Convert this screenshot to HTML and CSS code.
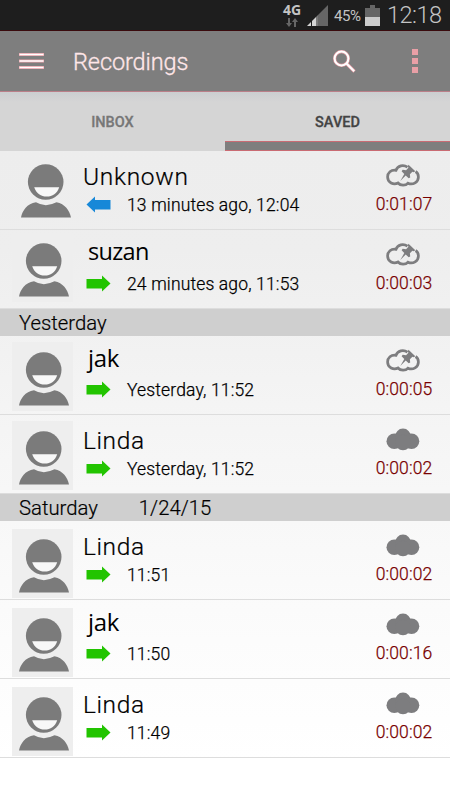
FILE: index.html
```html
<!DOCTYPE html>
<html lang="en">
<head>
  <meta charset="UTF-8">
  <title>Recordings</title>
  <link rel="stylesheet" href="styles.css">
</head>
<body>

  <!-- shared icons -->
  <svg class="defs" width="0" height="0">
    <symbol id="avatar" viewBox="0 0 61 69">
      <circle cx="31.7" cy="28" r="17.8" fill="#7b7b7b"/>
      <path d="M20.2 33.2H45.2C43 39.5 38.500 42.600 32.700 42.600S22.500 39.500 20.200 33.200Z" fill="#f8f8f8"/>
      <path d="M7 63.500C8.500 56.500 13 49.500 22 48.300Q31.500 54 42.500 48.300C51 50 55.500 56.500 57 63.500Z" fill="#7b7b7b"/>
    </symbol>
    <symbol id="arrow" viewBox="0 0 25 18">
      <path d="M.500 4H16V.500L24.500 8.500L16 16.500V13.500H.500Z"/>
    </symbol>
    <symbol id="cloud" viewBox="0 0 34 23">
      <g fill="#7d7d7f">
        <circle cx="8.300" cy="13.200" r="7.800"/>
        <circle cx="17" cy="8.500" r="7.900"/>
        <circle cx="25.500" cy="13.200" r="7.800"/>
        <circle cx="17" cy="14.500" r="7.800"/>
      </g>
    </symbol>
    <symbol id="cloud-pin" viewBox="0 0 34 23">
      <path d="M21.500 3.200C17.500.200 11.500 1.500 10 6.300C5 5.500 1.600 9 1.600 13C1.600 18.500 7.500 21.500 12 19C14.500 21.800 19.500 21.800 22 19.200C27 21.500 32.400 18 32.400 13C32.400 10.600 31.400 8.600 29.600 7.500" fill="none" stroke="#7d7d7f" stroke-width="2.700"/>
      <path d="M22.500.800L29.300 7.200L27.700 8.200L26.400 7.700L23.900 10.300L24.200 13.400L22.700 14.300L19.700 11.500L14.300 16.900L18.300 10.100L15.600 7.300L16.700 5.800L20.100 6.200L22.400 3.700L21.800 2.200Z" fill="#7d7d7f"/>
    </symbol>
  </svg>

  <div class="status">
    <div class="network">
      <span>4G</span>
      <svg width="12" height="9" viewBox="0 0 12 9"><path d="M2 0H4V5H6L3 9L0 5H2ZM8 9H10V4H12L9 0L6 4H8Z" fill="#666"/></svg>
    </div>
    <svg class="signal" width="21" height="21" viewBox="0 0 21 21">
      <path d="M0 21L11 10V21Z" fill="#d5d5d5"/>
      <path d="M11 10L21 0V21H11Z" fill="#666"/>
      <path d="M4.500 14V21M10 9V21" stroke="#1e1e1e"/>
    </svg>
    <span class="percent">45%</span>
    <svg class="battery" width="15" height="21" viewBox="0 0 15 21">
      <path d="M5 0H10V3H15V12H0V3H5Z" fill="#666"/>
      <path d="M0 12H15V21H0Z" fill="#ccc"/>
    </svg>
    <span class="clock">12:18</span>
  </div>

  <header class="appbar">
    <svg class="menu" width="25" height="16" viewBox="0 0 25 16"><path d="M0 1.500H25M0 8H25M0 14.500H25" stroke="#eaa0a8" stroke-width="2.800"/><path d="M.5 1.500H24.500M.5 8H24.500M.5 14.500H24.500" stroke="#fff" stroke-width="1.700"/></svg>
    <h1>Recordings</h1>
    <svg class="search" width="23" height="23" viewBox="0 0 23 23" fill="none">
      <g stroke="#eaa0a8" stroke-width="3.200"><circle cx="8.500" cy="8.500" r="6.900"/><path d="M13.500 13.500L21.500 21.500"/></g>
      <g stroke="#fff" stroke-width="2"><circle cx="8.500" cy="8.500" r="6.900"/><path d="M13.500 13.500L21.200 21.200"/></g>
    </svg>
    <div class="more"><i></i><i></i><i></i></div>
  </header>

  <nav class="tabs">
    <div class="tab">INBOX</div>
    <div class="tab active">SAVED</div>
  </nav>

  <main>
    <div class="row first">
      <svg class="avatar"><use href="#avatar"/></svg>
      <div class="info">
        <div class="name wide">Unknown</div>
        <div class="detail"><svg class="arrow in"><use href="#arrow"/></svg>13 minutes ago, 12:04</div>
      </div>
      <div class="side"><svg class="cloud"><use href="#cloud-pin"/></svg><span>0:01:07</span></div>
    </div>
    <div class="row second">
      <svg class="avatar"><use href="#avatar"/></svg>
      <div class="info">
        <div class="name alt">suzan</div>
        <div class="detail"><svg class="arrow"><use href="#arrow"/></svg>24 minutes ago, 11:53</div>
      </div>
      <div class="side"><svg class="cloud"><use href="#cloud-pin"/></svg><span>0:00:03</span></div>
    </div>

    <div class="day">Yesterday</div>

    <div class="row third">
      <svg class="avatar"><use href="#avatar"/></svg>
      <div class="info">
        <div class="name alt jak">jak</div>
        <div class="detail"><svg class="arrow"><use href="#arrow"/></svg>Yesterday, 11:52</div>
      </div>
      <div class="side"><svg class="cloud"><use href="#cloud-pin"/></svg><span>0:00:05</span></div>
    </div>
    <div class="row third">
      <svg class="avatar"><use href="#avatar"/></svg>
      <div class="info">
        <div class="name">Linda</div>
        <div class="detail"><svg class="arrow"><use href="#arrow"/></svg>Yesterday, 11:52</div>
      </div>
      <div class="side"><svg class="cloud"><use href="#cloud"/></svg><span>0:00:02</span></div>
    </div>

    <div class="day"><span>Saturday</span><span>1/24/15</span></div>

    <div class="row">
      <svg class="avatar"><use href="#avatar"/></svg>
      <div class="info">
        <div class="name">Linda</div>
        <div class="detail"><svg class="arrow"><use href="#arrow"/></svg>11:51</div>
      </div>
      <div class="side"><svg class="cloud"><use href="#cloud"/></svg><span>0:00:02</span></div>
    </div>
    <div class="row">
      <svg class="avatar"><use href="#avatar"/></svg>
      <div class="info">
        <div class="name alt jak">jak</div>
        <div class="detail"><svg class="arrow"><use href="#arrow"/></svg>11:50</div>
      </div>
      <div class="side"><svg class="cloud"><use href="#cloud"/></svg><span>0:00:16</span></div>
    </div>
    <div class="row">
      <svg class="avatar"><use href="#avatar"/></svg>
      <div class="info">
        <div class="name">Linda</div>
        <div class="detail"><svg class="arrow"><use href="#arrow"/></svg>11:49</div>
      </div>
      <div class="side"><svg class="cloud"><use href="#cloud"/></svg><span>0:00:02</span></div>
    </div>
  </main>

</body>
</html>
```
FILE: styles.css
```css
* { box-sizing: border-box; }
body {
  margin: 0;
  width: 450px;
  height: 800px;
  overflow: hidden;
  font-family: Roboto, "Liberation Sans", sans-serif;
  color: #000;
  background: linear-gradient(#ededed 150px, #eeeeee 250px, #f5f5f5 430px, #fcfcfc 640px, #fff 760px);
}
svg { display: block; flex: none; }
.defs { position: absolute; }

/* status bar */
.status {
  display: flex;
  height: 31px;
  padding-right: 8px;
  justify-content: flex-end;
  background: #1e1e1e;
  border-bottom: 1px solid #3a0a0d;
  color: #c4c4c4;
}
.network {
  display: flex;
  flex-direction: column;
  align-items: center;
  width: 18px;
  margin-right: 6px;
  padding-top: 3px;
  font: bold 14px/14px "Open Sans", sans-serif;
}
.network svg { margin-top: 1px; }
.signal { margin-top: 5px; }
.percent {
  width: 29px;
  margin-left: 6px;
  font-size: 15px;
  line-height: 32px;
  letter-spacing: -0.4px;
}
.battery { margin: 5px 0 0 2px; }
.clock {
  width: 55px;
  margin-left: 7px;
  font-size: 23.5px;
  font-weight: 300;
  line-height: 31px;
  letter-spacing: -0.5px;
  white-space: nowrap;
}

/* app bar */
.appbar {
  display: flex;
  align-items: center;
  height: 61px;
  padding: 0 32px 0 19px;
  background: #7e7e7e;
  border-bottom: 1px solid #ba7f89;
}
h1 {
  flex: 1;
  margin: 2px 0 0 29px;
  font-size: 23.5px;
  font-weight: 300;
  letter-spacing: -0.1px;
  color: #ffe6e8;
  -webkit-text-stroke: 0.3px #ffe6e8;
}
.search { margin-right: 56px; }
.more {
  display: grid;
  gap: 3px;
}
.more i {
  width: 6px;
  height: 6px;
  background: #e89fa6;
}

/* tabs */
.tabs {
  display: flex;
  height: 59px;
  background: linear-gradient(#cbced0, #d5d5d5 10px);
}
.tab {
  flex: 0 0 225px;
  font-size: 14.5px;
  font-weight: 500;
  line-height: 61px;
  text-align: center;
  color: #777;
  -webkit-text-stroke: 0.3px;
}
.tab.active {
  color: #444;
  background: linear-gradient(#c96b73 1px, #7e7e7e 1px, #7e7e7e 9px, #c96b73 9px) 0 100% / 100% 10px no-repeat;
}

/* list */
.row {
  display: flex;
  height: 79px;
  padding-left: 12px;
  border-bottom: 1px solid #ddd;
}
.avatar {
  width: 61px;
  height: 69px;
  margin-top: 8px;
  background: #eee;
}
.first .avatar {
  margin: 3px -2px 0 2px;
  background: none;
}
.second .avatar { margin-top: 3px; }
.third .avatar { margin-top: 6px; }
.info {
  flex: 1;
  padding: 10px 0 0 10px;
}
.name {
  height: 32px;
  font-size: 24.5px;
  font-weight: 300;
  line-height: 32px;
  letter-spacing: 0.6px;
  -webkit-text-stroke: 0.2px;
}
.name.wide { letter-spacing: 0.7px; }
.name.alt {
  padding-left: 5px;
  font-family: "Open Sans", sans-serif;
  font-size: 23.5px;
  font-weight: 400;
  line-height: 23px;
  letter-spacing: -0.7px;
  -webkit-text-stroke: 0;
}
.name.jak {
  font-size: 24px;
  line-height: 24px;
  letter-spacing: -0.3px;
}
.detail {
  display: flex;
  align-items: center;
  height: 23px;
  padding-left: 3px;
  font-size: 17.5px;
  font-weight: 300;
  letter-spacing: 0.15px;
  -webkit-text-stroke: 0.25px;
}
.arrow {
  width: 25px;
  height: 18px;
  margin: 1px 16px 0 0;
  fill: #22c400;
  stroke: none;
}
.arrow.in {
  fill: #1788d8;
  transform: scaleX(-1);
}
.side {
  display: flex;
  flex-direction: column;
  align-items: center;
  width: 58px;
  margin-right: 17px;
  padding-top: 13px;
  font-size: 17.5px;
  font-weight: 300;
  color: #780000;
  -webkit-text-stroke: 0.25px;
}
.cloud {
  width: 34px;
  height: 23px;
  margin-right: 3px;
}
.side span {
  margin-top: 6px;
  line-height: 23px;
  letter-spacing: 0.1px;
}
.day {
  display: flex;
  gap: 41px;
  height: 27px;
  padding-left: 19px;
  font-size: 20.3px;
  font-weight: 300;
  line-height: 29px;
  background: #cfcfcf;
  -webkit-text-stroke: 0.2px;
}
```
